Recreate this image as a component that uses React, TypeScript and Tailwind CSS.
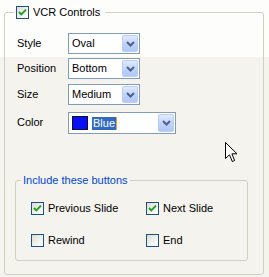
import React from "react";

function Check({ checked }: { checked?: boolean }) {
  return (
    <span className="relative inline-block h-[13px] w-[13px] shrink-0 border border-[#1c5180] bg-[linear-gradient(135deg,#dcdcd5_0%,#f3f3ef_60%,#ffffff_100%)]">
      {checked && (
        <svg width="11" height="11" viewBox="0 0 11 11" className="absolute left-0 top-0">
          <path d="M2 5 L4.3 7.4 L9 2.6" fill="none" stroke="#21a121" strokeWidth="2" />
        </svg>
      )}
    </span>
  );
}

function Arrow() {
  return (
    <span className="flex h-full w-[16px] items-center justify-center rounded-[2px] border border-[#b9cdf8] bg-[linear-gradient(to_bottom,#e1eafe,#c0d2fa_55%,#b2c7f5)]">
      <svg width="9" height="6" viewBox="0 0 9 6">
        <path d="M1 1 L4.5 4.5 L8 1" fill="none" stroke="#4d6185" strokeWidth="2" />
      </svg>
    </span>
  );
}

function Select({ value }: { value: string }) {
  return (
    <div className="flex h-[21px] w-[72px] items-stretch border border-[#7f9db9] bg-white p-[1px]">
      <span className="flex flex-1 items-center pl-[2px]">{value}</span>
      <Arrow />
    </div>
  );
}

const rows = ["Style", "Position", "Size"];
const values = ["Oval", "Bottom", "Medium"];

export default function App() {
  return (
    <div className="relative h-[277px] w-[269px] overflow-hidden bg-[linear-gradient(to_bottom,#fdfdfc_0px,#fdfdfc_57px,#f4f3ee_57px)] pl-[4px] pt-[6px] font-['Liberation_Sans',Arial,sans-serif] text-[11px] text-black">
      <fieldset className="h-[269px] w-[260px] rounded-[3px] border border-[#d0d0bf]">
        <legend className="ml-[9px] pl-[2px] pr-[5px]">
          <span className="flex h-[13px] items-center gap-[4px] leading-[13px]">
            <Check checked />
            <span>VCR Controls</span>
          </span>
        </legend>

        <div className="flex flex-col pl-[12px] pt-[14px]">
          {rows.map((r, i) => (
            <div key={r} className={`flex items-center ${i === 1 ? "mt-[4px]" : i === 2 ? "mt-[5px]" : ""}`}>
              <span className="w-[51px]">{r}</span>
              <Select value={values[i]} />
            </div>
          ))}
          <div className="mt-[7px] flex items-start">
            <span className="w-[51px] pt-[2px]">Color</span>
            <div className="flex h-[22px] w-[108px] items-center border border-[#7f9db9] bg-white p-[1px]">
              <span className="ml-[2px] h-[14px] w-[16px] border border-[#101030] bg-[#0a10f5]" />
              <span className="ml-[4px] h-[13px] border-r border-[#e8a038] bg-[#316ac5] px-[1px] leading-[13px] text-white">
                Blue
              </span>
              <span className="flex-1" />
              <span className="h-[18px]">
                <Arrow />
              </span>
            </div>
          </div>
        </div>

        <fieldset className="ml-[10px] mt-[40px] h-[87px] w-[233px] rounded-[3px] border border-[#d0d0bf]">
          <legend className="ml-[5px] px-[2px] leading-[13px] text-[#0046d5]">
            Include these buttons
          </legend>
          <div className="grid grid-cols-[115px_auto] gap-y-[19px] pl-[15px] pt-[15px]">
            {[
              ["Previous Slide", true],
              ["Next Slide", true],
              ["Rewind", false],
              ["End", false],
            ].map(([label, on]) => (
              <label key={label as string} className="flex h-[13px] items-center gap-[4px] leading-[13px]">
                <Check checked={on as boolean} />
                <span>{label as string}</span>
              </label>
            ))}
          </div>
        </fieldset>
      </fieldset>

      <svg width="14" height="22" viewBox="0 0 14 22" className="absolute left-[225px] top-[142px]">
        <path
          d="M0.5 0.5 L0.5 16.5 L4.5 12.8 L7.3 19.5 L9.6 18.5 L6.9 11.8 L12 11.8 Z"
          fill="#fff"
          stroke="#000"
          strokeWidth="1"
        />
      </svg>
    </div>
  );
}
